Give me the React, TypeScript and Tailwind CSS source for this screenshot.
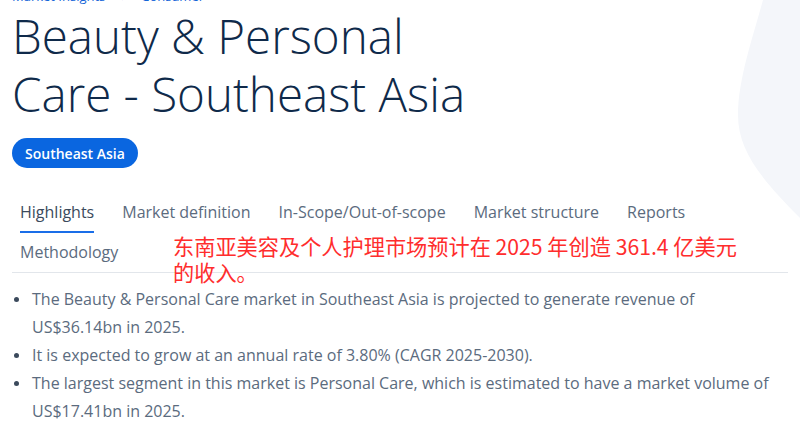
const tabs = ['Highlights', 'Market definition', 'In-Scope/Out-of-scope', 'Market structure', 'Reports', 'Methodology']

const highlights = [
    'The Beauty & Personal Care market in Southeast Asia is projected to generate revenue of US$36.14bn in 2025.',
    'It is expected to grow at an annual rate of 3.80% (CAGR 2025-2030).',
    'The largest segment in this market is Personal Care, which is estimated to have a market volume of US$17.41bn in 2025.',
]

export default function App() {
    return (
        <div className="relative h-[430px] w-[800px] overflow-hidden bg-white font-['Open_Sans',sans-serif]">
            {/* decorative background blob */}
            <svg className="absolute right-0 top-0" width="80" height="230" viewBox="720 0 80 230">
                <path d="M763 0 C752 40 738 80 738 115 C738 150 760 178 800 218 L800 0 Z" fill="#f4f6fa" />
            </svg>

            <div className="relative px-3">
                <div className="-mt-3 flex gap-4 text-[13px] leading-4 text-[#1565d8]">
                    <span>Market Insights</span>
                    <span>›</span>
                    <span>Consumer</span>
                </div>

                <h1 className="mt-[3px] text-[47.5px] font-light leading-[58px] text-[#0f2a4a]">
                    Beauty &amp; Personal
                    <br />
                    Care - Southeast Asia
                </h1>

                <div className="mt-[15px] flex">
                    <span className="flex h-[30px] items-center rounded-full bg-[#0a66e0] px-[13px] text-[14px] font-semibold text-white">
                        Southeast Asia
                    </span>
                </div>

                <div className="relative mt-[25px] border-b border-[#e2e6eb]">
                    <div className="flex w-[770px] flex-wrap gap-x-3">
                        {tabs.map((t, i) => (
                            <div key={t} className="flex h-[39.5px] px-2">
                                <button
                                    className={`border-b-2 pt-[1px] text-[16px] leading-6 ${i === 0 ? 'border-[#1a6ee8] font-medium text-[#3b4a5c]' : 'border-transparent text-[#5b6b7e]'}`}
                                >
                                    {t}
                                </button>
                            </div>
                        ))}
                    </div>

                    {/* red annotation overlay */}
                    <p className="absolute left-[161px] top-[40px] w-[578px] text-[21.2px] leading-[26px] text-[#ff2d2d] font-['Noto_Sans_CJK_SC',sans-serif]">
                        东南亚美容及个人护理市场预计在 2025 年创造 361.4 亿美元的收入。
                    </p>
                </div>

                <ul className="mt-3 w-[760px] text-[16px] leading-[28px] text-[#5b6b7e]">
                    {highlights.map(h => (
                        <li key={h} className="flex gap-[13px] pl-[2px]">
                            <span className="mt-[12px] h-[5px] w-[5px] shrink-0 rounded-full bg-[#3b4a5c]" />
                            <span>{h}</span>
                        </li>
                    ))}
                </ul>
            </div>
        </div>
    )
}
